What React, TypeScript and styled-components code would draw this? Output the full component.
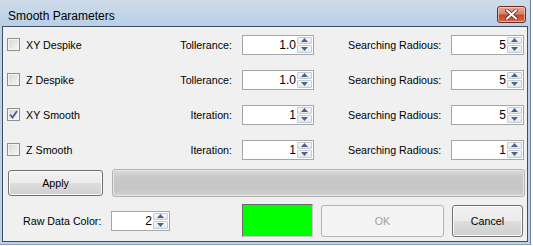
import styled, { createGlobalStyle } from "styled-components"

const GlobalStyle = createGlobalStyle`
  html, body {
    margin: 0;
    padding: 0;
    background: #fff;
  }
  body {
    font-family: "Liberation Sans", Arial, sans-serif;
    font-size: 10.7px;
    color: #000;
  }
`

const Window = styled.div`
  display: flex;
  flex-direction: column;
  width: 526px;
  padding: 0 2px 2px 2px;
  border-right: 1px solid #6f829a;
  border-bottom: 1px solid #8da2bb;
  background: linear-gradient(to bottom, #cfdbe8 0, #b8cfe7 26px, #b9d1ea 26px);
`
const TitleBar = styled.div`
  display: flex;
  align-items: center;
  justify-content: space-between;
  height: 26px;
  padding: 0 2px 0 6px;
`
const TitleText = styled.span`
  font-family: "Liberation Sans", Arial, sans-serif;
  font-size: 12px;
  color: #000;
  margin-top: 5px;
`
const CloseButton = styled.div`
  display: flex;
  align-items: center;
  justify-content: center;
  width: 27px;
  height: 15px;
  margin-top: 3px;
  border: 1px solid #6b2c22;
  border-radius: 3px;
  background: linear-gradient(to bottom, #e8a89c 0%, #d7826f 45%, #c5452e 55%, #d56b4e 100%);
  box-shadow: inset 0 0 0 1px rgba(255, 220, 210, 0.6);
`
const Client = styled.div`
  display: flex;
  flex-direction: column;
  border: 1px solid #404e60;
  background: #f0f0f0;
  padding-bottom: 4px;
`
const ParamRow = styled.div`
  display: flex;
  align-items: center;
  height: 35px;
  padding-left: 4px;
`
const CheckCell = styled.label`
  display: flex;
  align-items: center;
  gap: 6px;
  width: 165px;
`
const CheckBox = styled.span<{ checked?: boolean }>`
  display: flex;
  align-items: center;
  justify-content: center;
  box-sizing: border-box;
  width: 13px;
  height: 13px;
  border: 1px solid #8f8f8f;
  background: linear-gradient(135deg, #d6d6d6, #f8f8f8);
  box-shadow: inset 0 0 0 1px #f4f4f4;
`
const ParamLabel = styled.span`
  width: 60px;
  text-align: right;
  white-space: nowrap;
`
const SearchLabel = styled.span`
  width: 103px;
  margin-left: 34px;
  white-space: nowrap;
`
const SpinBox = styled.div<{ width: number; gapLeft?: number }>`
  display: flex;
  align-items: stretch;
  flex-shrink: 0;
  box-sizing: border-box;
  width: ${(p) => p.width}px;
  height: 20px;
  margin-left: ${(p) => p.gapLeft ?? 0}px;
  border: 1px solid #a5a5a5;
  background: #fff;
  padding: 1px;
`
const SpinValue = styled.span`
  flex: 1;
  display: flex;
  align-items: center;
  justify-content: flex-end;
  padding-right: 1px;
  font-size: 12px;
`
const SpinButtons = styled.div`
  display: flex;
  flex-direction: column;
  gap: 1px;
  width: 15px;
`
const SpinArrow = styled.div`
  flex: 1;
  display: flex;
  align-items: center;
  justify-content: center;
  box-sizing: border-box;
  border: 1px solid #c3cad3;
  border-radius: 1px;
  background: linear-gradient(to bottom, #f7f9fb, #e3e8ee);
`
const ActionRow = styled.div`
  display: flex;
  align-items: center;
  gap: 9px;
  height: 28px;
  margin-top: 2px;
  padding-left: 5px;
`
const Button = styled.button<{ width: number; height: number; gapLeft?: number }>`
  flex-shrink: 0;
  box-sizing: border-box;
  width: ${(p) => p.width}px;
  height: ${(p) => p.height}px;
  margin: 0 0 0 ${(p) => p.gapLeft ?? 0}px;
  padding: 0;
  border: 1px solid ${(p) => (p.disabled ? "#adb2b5" : "#707070")};
  border-radius: 3px;
  background: ${(p) =>
    p.disabled
      ? "#f4f4f4"
      : "linear-gradient(to bottom, #f2f2f2 0%, #ebebeb 48%, #dddddd 52%, #cfcfcf 100%)"};
  box-shadow: inset 0 0 0 1px ${(p) => (p.disabled ? "#f7f7f7" : "#fcfcfc")};
  color: ${(p) => (p.disabled ? "#a0a0a0" : "#000")};
  font-family: "Liberation Sans", Arial, sans-serif;
  font-size: 10.7px;
`
const ProgressBar = styled.div`
  box-sizing: border-box;
  width: 413px;
  height: 28px;
  border: 1px solid #b2b2b2;
  border-radius: 3px;
  background: linear-gradient(to bottom, #dadada 0%, #c8c8c8 30%, #c6c6c6 75%, #d2d2d2 100%);
  box-shadow: inset 0 0 0 1px #e6e6e6;
`
const BottomRow = styled.div`
  display: flex;
  align-items: center;
  height: 33px;
  margin-top: 7px;
  padding-left: 20px;
`
const ColorLabel = styled.span`
  flex-shrink: 0;
  width: 77px;
  white-space: nowrap;
`
const ColorSwatch = styled.div<{ color: string }>`
  flex-shrink: 0;
  box-sizing: border-box;
  width: 71px;
  height: 33px;
  margin-left: 72px;
  border: 1px solid #6a6a6a;
  border-right-color: #c8c8c8;
  border-bottom-color: #c8c8c8;
  background: ${(p) => p.color};
`

function Spin({ value, width, gapLeft }: { value: string; width: number; gapLeft?: number }) {
  return (
    <SpinBox width={width} gapLeft={gapLeft}>
      <SpinValue>{value}</SpinValue>
      <SpinButtons>
        <SpinArrow>
          <svg width="7" height="4" viewBox="0 0 7 4"><path d="M0 4 L3.5 0 L7 4 Z" fill="#4d6185" /></svg>
        </SpinArrow>
        <SpinArrow>
          <svg width="7" height="4" viewBox="0 0 7 4"><path d="M0 0 L3.5 4 L7 0 Z" fill="#4d6185" /></svg>
        </SpinArrow>
      </SpinButtons>
    </SpinBox>
  )
}

const rows = [
  { name: "XY Despike", checked: false, param: "Tollerance:", value: "1.0", radius: "5" },
  { name: "Z Despike", checked: false, param: "Tollerance:", value: "1.0", radius: "5" },
  { name: "XY Smooth", checked: true, param: "Iteration:", value: "1", radius: "5" },
  { name: "Z Smooth", checked: false, param: "Iteration:", value: "1", radius: "1" },
]

export default function App() {
  return (
    <>
      <GlobalStyle />
      <Window>
        <TitleBar>
          <TitleText>Smooth Parameters</TitleText>
          <CloseButton>
            <svg width="13" height="11" viewBox="0 0 13 11">
              <path d="M2 1.5 L11 9.5 M11 1.5 L2 9.5" stroke="#5a2a22" strokeWidth="3.6" strokeLinecap="square" />
              <path d="M2 1.5 L11 9.5 M11 1.5 L2 9.5" stroke="#fff" strokeWidth="2" strokeLinecap="square" />
            </svg>
          </CloseButton>
        </TitleBar>
        <Client>
          {rows.map((r) => (
            <ParamRow key={r.name}>
              <CheckCell>
                <CheckBox checked={r.checked}>
                  {r.checked && (
                    <svg width="9" height="9" viewBox="0 0 9 9">
                      <path d="M1 4.5 L3.5 7.5 L8 1" fill="none" stroke="#4a5d8f" strokeWidth="1.8" />
                    </svg>
                  )}
                </CheckBox>
                {r.name}
              </CheckCell>
              <ParamLabel>{r.param}</ParamLabel>
              <Spin value={r.value} width={72} gapLeft={10} />
              <SearchLabel>Searching Radious:</SearchLabel>
              <Spin value={r.radius} width={73} />
            </ParamRow>
          ))}
          <ActionRow>
            <Button width={95} height={26}>Apply</Button>
            <ProgressBar />
          </ActionRow>
          <BottomRow>
            <ColorLabel>Raw Data Color:</ColorLabel>
            <Spin value="2" width={59} gapLeft={11} />
            <ColorSwatch color="#00ff00" />
            <Button width={123} height={32} gapLeft={8} disabled>OK</Button>
            <Button width={71} height={32} gapLeft={8}>Cancel</Button>
          </BottomRow>
        </Client>
      </Window>
    </>
  )
}
